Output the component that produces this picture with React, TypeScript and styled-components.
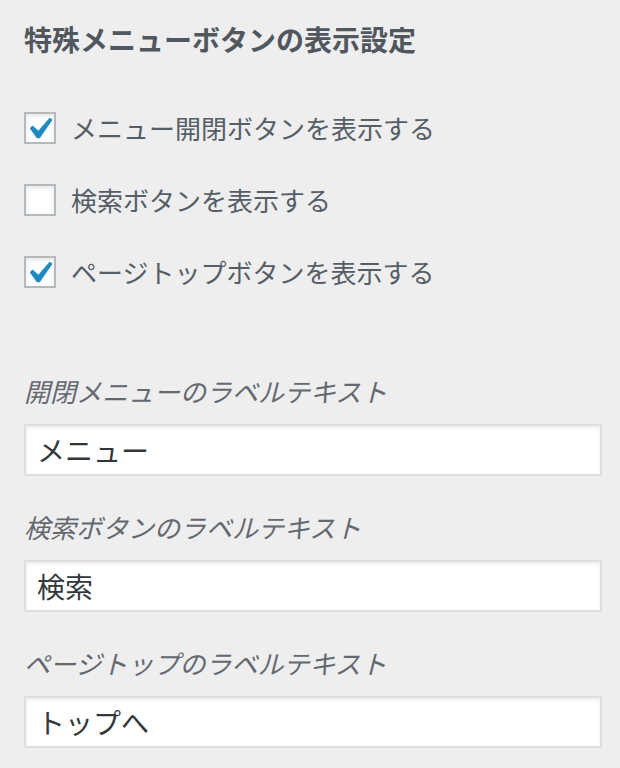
import styled, { createGlobalStyle } from "styled-components";

const GlobalStyle = createGlobalStyle`
  html, body {
    margin: 0;
    padding: 0;
    background: #eeeeee;
  }
  body {
    font-family: "Noto Sans CJK JP", "Noto Sans", sans-serif;
  }
`;

const toggles = [
  { label: "メニュー開閉ボタンを表示する", checked: true },
  { label: "検索ボタンを表示する", checked: false },
  { label: "ページトップボタンを表示する", checked: true },
];

const fields = [
  { label: "開閉メニューのラベルテキスト", value: "メニュー" },
  { label: "検索ボタンのラベルテキスト", value: "検索" },
  { label: "ページトップのラベルテキスト", value: "トップへ" },
];

const CheckIcon = () => (
  <svg width="44" height="44" viewBox="0 0 20 20">
    <path d="M14.83 4.89l1.34.94-5.81 8.38H9.02L5.78 9.67l1.34-1.25 2.57 2.4z" fill="#1e8cbe" />
  </svg>
);

export default function App() {
  return (
    <>
      <GlobalStyle />
      <Panel>
        <Title>特殊メニューボタンの表示設定</Title>
        <CheckList>
          {toggles.map((t) => (
            <CheckRow key={t.label}>
              <Box>{t.checked && <CheckIcon />}</Box>
              <CheckLabel>{t.label}</CheckLabel>
            </CheckRow>
          ))}
        </CheckList>
        <FieldList>
          {fields.map((f) => (
            <Field key={f.label}>
              <Description>{f.label}</Description>
              <TextInput type="text" defaultValue={f.value} />
            </Field>
          ))}
        </FieldList>
      </Panel>
    </>
  );
}

const Panel = styled.div`
  padding: 19px 18px 20px 24px;
  height: 768px;
  box-sizing: border-box;
  overflow: hidden;
`;

const Title = styled.h3`
  margin: 0;
  font-size: 28px;
  line-height: 40px;
  font-weight: 700;
  color: #50575e;
`;

const CheckList = styled.div`
  display: flex;
  flex-direction: column;
  gap: 40px;
  margin-top: 53px;
`;

const CheckRow = styled.label`
  display: flex;
  align-items: center;
  gap: 15px;
  height: 32px;
  cursor: pointer;
`;

const Box = styled.span`
  position: relative;
  flex: none;
  width: 32px;
  height: 32px;
  box-sizing: border-box;
  border: 2px solid #b4b9be;
  background: #ffffff;
  box-shadow: inset 0 2px 4px rgba(0, 0, 0, 0.1);

  svg {
    position: absolute;
    left: -9px;
    top: -7px;
  }
`;

const CheckLabel = styled.span`
  font-size: 26px;
  line-height: 32px;
  color: #555d66;
`;

const FieldList = styled.div`
  display: flex;
  flex-direction: column;
  gap: 33px;
  margin-top: 85px;
`;

const Field = styled.div`
  display: flex;
  flex-direction: column;
  gap: 15px;
`;

const Description = styled.span`
  font-size: 26px;
  line-height: 36px;
  font-style: italic;
  color: #646970;
`;

const TextInput = styled.input`
  width: 100%;
  height: 52px;
  box-sizing: border-box;
  margin: 0;
  padding: 0 11px;
  border: 2px solid #dddddd;
  background: #ffffff;
  box-shadow: inset 0 2px 4px rgba(0, 0, 0, 0.07);
  font-family: "Noto Sans CJK JP", "Noto Sans", sans-serif;
  font-size: 28px;
  color: #32373c;
  outline: none;
`;
